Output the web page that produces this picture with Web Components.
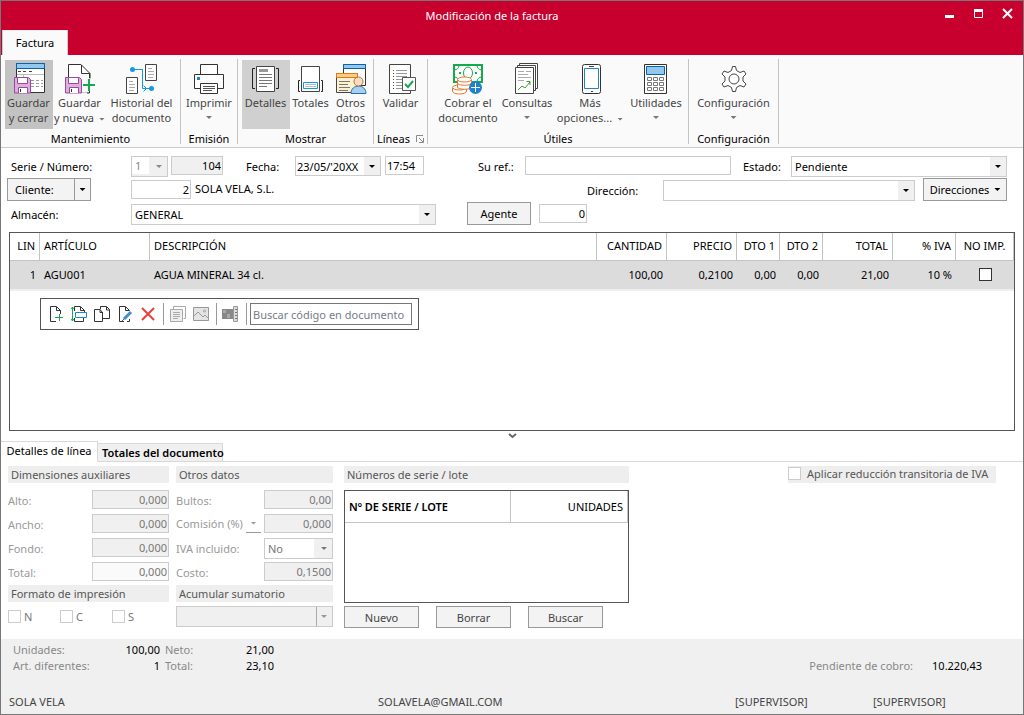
<!DOCTYPE html>
<html lang="es">
<head>
<meta charset="utf-8">
<title>Modificación de la factura</title>
<style>
html, body { margin: 0; height: 100%; }
body { font: 11px/15px "Noto Sans", "Open Sans", sans-serif; color: #000; background: #fff; }
</style>
</head>
<body>
<invoice-window></invoice-window>

<script>
const BASE = `
*, *::before, *::after { box-sizing: border-box; }
button, input, select { font: inherit; color: inherit; margin: 0; padding: 0; border-radius: 0; outline: 0; }
input[type=text] { height: 19px; border: 1px solid #ccc; background: #fff; padding: 0 3px; min-width: 0; }
input.num { text-align: right; padding: 0 1px; }
input:disabled, select:disabled { opacity: 1; }
.btn { border: 1px solid #999; background: #f3f3f3; text-align: center; white-space: nowrap; }
.sel { display: grid; position: relative; height: 21px; border: 1px solid #ccc; background: #fff; }
.sel select { appearance: none; border: 0; background: none; width: 100%; height: 100%; padding: 0 18px 0 3px; }
.sel::before { content: ""; position: absolute; top: 0; right: 0; bottom: 0; width: 16px; background: #f0f0f0; }
.sel::after, .tri::after { content: ""; width: 6px; height: 3px; background: currentColor; clip-path: polygon(0 0, 100% 0, 50% 100%); }
.sel::after { position: absolute; top: 8px; right: 5px; pointer-events: none; }
`;
function define(name, css, html, setup) {
  const tpl = document.createElement('template');
  tpl.innerHTML = `<style>${BASE}${css}</style>${html}`;
  customElements.define(name, class extends HTMLElement {
    connectedCallback() {
      if (this.shadowRoot) return;
      const root = this.attachShadow({ mode: 'open' });
      const content = tpl.content.cloneNode(true);
      if (setup) setup(this, content);
      root.append(content);
    }
  });
}

const FLOPPY = `<path d="M2.5 15.500h14l2 2v13.500h-16z" fill="#dcaedd" stroke="#9a4a9e"/><path d="M5.500 15.500h10v6h-10z" fill="#fff" stroke="#9a4a9e"/><path d="M6.500 31v-5.500h9V31" fill="#fff" stroke="#9a4a9e"/><path d="M8.500 27v3" stroke="#333"/>`;
const ICONS = {
  save: `<path d="M4.500 1.500h28v29h-28z" fill="#fff" stroke="#333"/><path d="M4.500 1.500h28v5h-28z" fill="#92c8ee" stroke="#0a63a8"/><path d="M6 9.500h3M11 9.500h3M17 9.500h3" stroke="#444"/><path d="M5 12.500h27M11.500 12.500v4" stroke="#bbb"/><path d="M19 18.500h3m2 0h3m2 0h2M19 21.500h3m2 0h3m2 0h2M19 24.500h3m2 0h3m2 0h2" stroke="#999"/>${FLOPPY}`,
  savenew: `<path d="M5.500 30V2.500H18l9 9V30H19" fill="#fff" stroke="#333"/><path d="M18.500 3v8.500H27" fill="none" stroke="#333"/>${FLOPPY}<path d="M19 16.500h13v14H19z" fill="#fafafa"/><path d="M26.500 29v2H24M26.500 12v4" fill="none" stroke="#333"/><path d="M20 23h12M26 17v12" stroke="#16a94d" stroke-width="2"/>`,
  history: `<g fill="#fff" stroke="#444"><path d="M20.500 2.500h11v16h-11zM1.500 15.500h11v16h-11z"/></g><path d="M23 6.500h4M23 9.500h6M23 12.500h6M23 15.500h5M4 19.500h4M4 22.500h6M4 25.500h6M4 28.500h5" stroke="#aaa"/><path d="M7 7.500h10.500v19H27M18.500 23.500l3 3-3 3" fill="none" stroke="#129bdb"/><circle cx="7.500" cy="7.500" r="2.500" fill="#129bdb"/><circle cx="26.500" cy="26.500" r="2.500" fill="#129bdb"/>`,
  print: `<g fill="#fff" stroke="#333"><path d="M8.500 12.500v-10h17v10z"/><path d="M2.500 12.500h29v14h-29z"/><path d="M8.500 21.500h17v10h-17z"/></g><path d="M5 15h3v3H5z" fill="#1e83c8"/><path d="M11 24.500h12M11 26.500h12M11 28.500h9" stroke="#555"/>`,
  details: `<path d="M7.500 4.500h18v25h-18z" fill="#fff" stroke="#444"/><path d="M10 7h9v3h-9z" fill="#999"/><path d="M10 12.500h13M10 15.500h13M10 18.500h13M10 21.500h13M10 24.500h8" stroke="#777"/><path d="M6 6.500H3.500v20H6M27 6.500h2.500v20H27" fill="none" stroke="#222"/>`,
  totals: `<path d="M7.500 4.500h18v25h-18z" fill="#fff" stroke="#444"/><path d="M9.500 20.500h14v6h-14z" fill="#fff" stroke="#129bdb"/><path d="M11 22.500h11M11 24.500h11" stroke="#bbb"/><path d="M6 18.500H4.500v11H6M27 18.500h1.500v11H27" fill="none" stroke="#222"/>`,
  other: `<path d="M9.500 2.500h22v21h-22z" fill="#fff" stroke="#333"/><path d="M9.500 2.500h22v4h-22z" fill="#92c8ee" stroke="#0a63a8"/><path d="M2.500 11.500h21v19h-21z" fill="#fdf0cf" stroke="#444"/><path d="M2.500 11.500h21v4h-21z" fill="#f8cf86" stroke="#dd7a1c"/><path d="M5 19.500h11M5 22.500h9M5 25.500h11M5 28.500h9" stroke="#777"/><path d="M17 31.500c0-10 15-10 15 0z" fill="#a9cfec" stroke="#1e72b5"/><circle cx="24.500" cy="19.500" r="4.500" fill="#fbdcc0" stroke="#b5713a"/>`,
  validate: `<path d="M5.500 2.500h21v29h-21z" fill="#fff" stroke="#444"/><path d="M9 8.500h1M9 17.500h1M9 23.500h1" stroke="#d22"/><path d="M9 11.500h1M9 14.500h1M9 20.500h1M9 26.500h1" stroke="#161"/><path d="M12 8.500h11M12 11.500h11M12 14.500h11M12 17.500h6M12 20.500h6M12 23.500h6M12 26.500h6" stroke="#999"/><path d="M18.500 15.500h13v13h-13z" fill="#fff" stroke="#555"/><path d="M21 22l3 3 5-6" fill="none" stroke="#16a94d" stroke-width="2"/>`,
  charge: `<path d="M3 3h28v17H3z" fill="#fff" stroke="#16a94d" stroke-width="2"/><path d="M3 8c3 0 5-2 5-5M31 8c-3 0-5-2-5-5M31 15c-3 0-5 2-5 5M3 15c3 0 5 2 5 5" fill="none" stroke="#16a94d"/><ellipse cx="17" cy="11" rx="4.500" ry="6" fill="none" stroke="#16a94d"/><path d="M8 11h2M24 11h2" stroke="#16a94d" stroke-width="2"/><g fill="#fff" stroke="#e8762c"><path d="M1.500 26v3c0 4 14 4 14 0v-3"/><ellipse cx="8.500" cy="25.500" rx="7" ry="2.500"/><path d="M6.500 18v7c0 3 14 3 14 0v-7"/><path d="M6.500 21c0 3 14 3 14 0"/><ellipse cx="13.500" cy="17.500" rx="7" ry="2.500"/></g><circle cx="24.500" cy="25.500" r="6.500" fill="#1e83c8"/><path d="M20 25.500h9M24.500 21v9" stroke="#fff"/>`,
  query: `<g fill="#fff" stroke="#444"><path d="M9.500 1.500h18v25h-18z"/><path d="M7.500 3.500h18v25h-18z"/><path d="M5.500 5.500h18v26h-18z"/></g><path d="M8 9.500h6M16 9.500h5M8 12.500h10M8 15.500h13M8 18.500h6" stroke="#aaa"/><path d="M8 28l4-4 3 2 5-6M16.500 19.500H20V23" fill="none" stroke="#38a52a"/>`,
  phone: `<rect x="9.500" y="2.500" width="18" height="29" rx="2" fill="#fff" stroke="#333"/><path d="M11.500 6.500h14v20h-14z" fill="#fff" stroke="#1e83c8"/><path d="M16 4.500h5M18 29.500h2" stroke="#444"/>`,
  calc: `<path d="M5.500 2.500h22v29h-22z" fill="#fff" stroke="#333"/><path d="M7.500 4.500h18v8h-18z" fill="#92c8ee" stroke="#0a63a8"/><path d="M8.500 15.500h4v3h-4zM14.500 15.500h4v3h-4zM20.500 15.500h4v3h-4zM8.500 20.500h4v3h-4zM14.500 20.500h4v3h-4zM20.500 20.500h4v3h-4zM8.500 25.500h4v3h-4zM14.500 25.500h4v3h-4zM20.500 25.500h4v3h-4z" fill="none" stroke="#777"/>`,
  gear: `<path id="g" d="M14.500 8.500l1-4h3l1 4 3.500 2 4-1.500 2 3-3 3v4l3 3-2 3-4-1.500-3.500 2-1 4h-3l-1-4-3.500-2-4 1.500-2-3 3-3v-4l-3-3 2-3 4 1.500z" fill="#fff" stroke="#444" stroke-linejoin="round"/><circle cx="17" cy="17" r="5" fill="none" stroke="#444"/>`
};
define('ribbon-icon', `:host { display: block; width: 34px; height: 33px; } svg { display: block; }`,
  `<svg width="34" height="34" viewBox="0 0 34 34" aria-hidden="true"></svg>`,
  (el, root) => { root.querySelector('svg').innerHTML = ICONS[el.getAttribute('name')]; });

define('title-bar', `
:host { display: grid; grid-template-columns: 1fr auto 1fr; align-items: start; background: #c8002d; color: #fff; height: 29px; padding: 0 8px 0 0; }
h1 { grid-column: 2; font: inherit; margin: 7px 32px 0 0; }
div { justify-self: end; display: flex; gap: 14px; padding-top: 5px; }
button { width: 15px; height: 15px; border: 0; background: none; display: grid; place-items: center; }
svg { display: block; }`,
`<h1><slot></slot></h1><div>
<button aria-label="Minimizar"><svg width="11" height="11"><path d="M1 8.500h9" stroke="#fff" stroke-width="3"/></svg></button>
<button aria-label="Maximizar"><svg width="11" height="11"><path d="M1.500 2v7.500h8V2" fill="none" stroke="#fff"/><path d="M1 2.500h9" stroke="#fff" stroke-width="3"/></svg></button>
<button aria-label="Cerrar"><svg width="11" height="11"><path d="M1 1l9 9M10 1l-9 9" stroke="#fff" stroke-width="2"/></svg></button></div>`);

define('ribbon-button', `
:host { display: block; height: 69px; color: #444; flex: none; }
:host([active]) { background: #d0d0d0; }
:host([focus]) { background: #c3c3c3; }
button { width: 100%; height: 100%; border: 0; background: none; padding-top: 2px; display: flex; flex-direction: column; align-items: center; white-space: nowrap; }
.tri { display: none; color: #777; }
:host([menu]) .tri { display: inline-flex; margin-left: 5px; vertical-align: middle; }
:host([menu=below]) .tri { display: flex; justify-content: center; margin: 6px 0 0; }`,
`<button><ribbon-icon></ribbon-icon><span><slot></slot><span class="tri"></span></span></button>`,
(el, root) => root.querySelector('ribbon-icon').setAttribute('name', el.getAttribute('icon')));

define('ribbon-group', `
:host { display: flex; flex-direction: column; height: 85px; border-right: 1px solid #c4c4c4; }
.row { display: flex; padding-top: 1px; justify-content: center; }
.name { display: flex; justify-content: center; gap: 6px; margin-top: 2px; align-items: center; }
svg { display: none; }
:host([launcher]) svg { display: block; }`,
`<div class="row"><slot></slot></div><div class="name"><span></span><svg width="8" height="8"><path d="M.5 7V.5H7M3 3l4 4M7.500 3v4.500H3" fill="none" stroke="#888"/></svg></div>`,
(el, root) => { root.querySelector('span').textContent = el.getAttribute('label'); });

define('ribbon-bar', `
:host { display: block; background: #c8002d; }
nav { padding-left: 1px; height: 25px; display: flex; }
nav button { width: 66px; border: 1px solid #ccc; border-bottom: 0; border-top-color: #eee; background: #fafafa; padding-bottom: 1px; }
.body { display: flex; background: #fafafa; padding-top: 4px; height: 93px; border-bottom: 1px solid #ccc; }
.w180 { width: 180px; } .w57 { width: 57px; } .w136 { width: 136px; } .w54 { width: 54px; } .w261 { width: 261px; } .w90 { width: 90px; }
.b38 { width: 38px; } .b42 { width: 42px; } .b48 { width: 48px; } .b54 { width: 54px; } .b70 { width: 70px; } .b78 { width: 78px; }`,
`<nav><button>Factura</button></nav>
<div class="body">
<ribbon-group class="w180" label="Mantenimiento">
<ribbon-button class="b48" icon="save" focus>Guardar<br>y cerrar</ribbon-button>
<ribbon-button class="b54" icon="savenew" menu>Guardar<br>y nueva</ribbon-button>
<ribbon-button class="b70" icon="history">Historial del<br>documento</ribbon-button></ribbon-group>
<ribbon-group class="w57" label="Emisión"><ribbon-button class="b48" icon="print" menu="below">Imprimir</ribbon-button></ribbon-group>
<ribbon-group class="w136" label="Mostrar">
<ribbon-button class="b48" icon="details" active>Detalles</ribbon-button>
<ribbon-button class="b42" icon="totals">Totales</ribbon-button>
<ribbon-button class="b38" icon="other">Otros<br>datos</ribbon-button></ribbon-group>
<ribbon-group class="w54" label="Líneas" launcher><ribbon-button class="b48" icon="validate">Validar</ribbon-button></ribbon-group>
<ribbon-group class="w261" label="Útiles">
<ribbon-button class="b70" icon="charge">Cobrar el<br>documento</ribbon-button>
<ribbon-button class="b48" icon="query" menu="below">Consultas</ribbon-button>
<ribbon-button class="b78" icon="phone" menu>Más<br>opciones...</ribbon-button>
<ribbon-button class="b54" icon="calc" menu="below">Utilidades</ribbon-button></ribbon-group>
<ribbon-group class="w90" label="Configuración"><ribbon-button class="b78" icon="gear" menu="below">Configuración</ribbon-button></ribbon-group>
</div>`);

define('invoice-form', `
:host { display: block; padding: 8px 16px 6px 6px; }
.row { display: flex; height: 24px; align-items: flex-start; }
.row:first-child { height: 22px; }
label { padding-top: 5px; flex: none; white-space: nowrap; }
.row:first-child label { padding-top: 3px; }
.first { width: 124px; padding-left: 4px; flex: none; }
.split { width: 124px; display: flex; flex: none; }
.split .btn:first-child { width: 68px; text-align: left; padding-left: 7px; }
.split .btn:last-child { width: 17px; margin-left: -1px; }
.btn { height: 23px; }
.tri { display: inline-flex; align-items: center; justify-content: center; gap: 5px; }
.serie { width: 37px; margin-right: 3px; color: #888; background: #f0f0f0; }
.serie select { background: #fff; width: 17px; padding: 0 0 0 3px; height: 17px; }
.gray { background: #f0f0f0 !important; }
.w39 { width: 39px; } .w48 { width: 48px; } .w52 { width: 52px; } .w60 { width: 60px; } .w64 { width: 64px; } .w84 { width: 84px; } .w86 { width: 86px; }
.date { height: 20px; }
.date select, .time.time { padding: 0 1px; }
.fecha { width: 72px; padding-left: 23px; }
.ref { width: 101px; padding-left: 54px; }
.estado { width: 60px; padding-left: 12px; }
.grow { flex: 1 1 206px; } .grow2 { flex: 1 1 216px; }
.name { width: 396px; padding: 3px 0 0 4px; flex: none; }
.dir { width: 76px; }
.alm { width: 305px; }
.mt { margin-top: 2px; }
.gap4 { margin-left: 4px; } .gap8 { margin-left: 8px; } .gap31 { margin-left: 31px; }`,
`<form>
<div class="row"><label class="first" for="serie">Serie / Número:</label>
<span class="sel serie"><select id="serie" disabled><option>1</option></select></span>
<input type="text" class="num gray w52" aria-label="Número" value="104">
<label class="fecha" for="fecha">Fecha:</label>
<span class="sel w86 date"><select id="fecha"><option>23/05/'20XX</option></select></span>
<input type="text" class="w39 gap4 time" aria-label="Hora" value="17:54">
<label class="ref" for="ref">Su ref.:</label><input type="text" class="grow" id="ref">
<label class="estado" for="estado">Estado:</label>
<span class="sel grow2"><select id="estado"><option>Pendiente</option></select></span></div>
<div class="row"><span class="split"><button type="button" class="btn">Cliente:</button><button type="button" class="btn tri" aria-label="Opciones de cliente"></button></span>
<input type="text" class="num w60 mt" aria-label="Código de cliente" value="2"><span class="name">SOLA VELA, S.L.</span>
<label class="dir" for="dir">Dirección:</label>
<span class="sel grow mt"><select id="dir"><option></option></select></span>
<button type="button" class="btn tri w84 gap8">Direcciones</button></div>
<div class="row"><label class="first" for="alm">Almacén:</label>
<span class="sel alm mt"><select id="alm"><option>GENERAL</option></select></span>
<button type="button" class="btn w64 gap31">Agente</button>
<input type="text" class="num w48 gap8 mt" aria-label="Agente" value="0"></div>
</form>`);

define('line-toolbar', `
:host { display: flex; align-items: center; width: 379px; height: 32px; border: 1px solid #555; background: #fff; padding: 0 6px 0 3px; }
button { width: 23px; height: 22px; border: 0; background: none; display: grid; place-items: center; flex: none; }
i { width: 1px; height: 22px; background: #999; margin: 0 2px 0 4px; flex: none; }
input[type=text] { flex: 1; height: 22px; border-color: #777; padding: 0 2px; margin-left: 1px; }
input::placeholder { color: #757b88; opacity: 1; }
svg { display: block; fill: none; stroke: #333; }`,
`<button aria-label="Nueva línea"><svg width="16" height="16"><path d="M8 15.500H2.500V.500h6l4 4V8M8.500 1v3.500h4"/><path d="M7 11.500h8M11.500 8v7" stroke="#16a94d"/></svg></button>
<button aria-label="Insertar línea"><svg width="16" height="16"><path d="M3.500 5V.500h6l4 4V6M9.500 1v3.500h4M3.500 12v3.500h9V12"/><path d="M4.500 6.500h11v5h-11z" stroke="#1e83c8"/><path d="M1.500 1v14M0 3l1.500-2L3 3M0 13l1.500 2L3 13" stroke="#16a94d"/></svg></button>
<button aria-label="Duplicar"><svg width="18" height="16"><path d="M7 3.500H1.500v12h8v-9L7 3.500v3h3"/><path d="M7.500 3V.500h6l3 3v9h-7M13.500 1v3h3"/></svg></button>
<button aria-label="Modificar"><svg width="16" height="16"><path d="M7 15.500H2.500V.500h6l4 4M8.500 1v3.500h4M10 15.500h2.500V13"/><path d="M7 13l7-7" stroke="#3b8fd2" stroke-width="3"/><path d="M5 15l2-2" stroke="#1e72b5"/></svg></button>
<button aria-label="Eliminar"><svg width="14" height="14"><path d="M1 1l12 12M13 1L1 13" stroke="#e8403c" stroke-width="2"/></svg></button>
<i></i>
<button aria-label="Notas"><svg width="16" height="16" style="stroke:#aaa"><path d="M3.500 3V.500h12v12h-2"/><path d="M.5 3.500h12v12H.5z" fill="#eee"/><path d="M3 6.500h7M3 8.500h7M3 10.500h7M3 12.500h5"/></svg></button>
<button aria-label="Imagen"><svg width="16" height="14" style="stroke:#999"><path d="M.5.500h15v13H.5z" fill="#e4e4e4"/><path d="M1 9l4-4 5 5 2-2 3 3" /><circle cx="11.500" cy="4" r="1" fill="#fff"/></svg></button>
<i></i>
<button aria-label="Tallas y colores"><svg width="17" height="16" style="stroke:none"><path d="M0 3h11v10H0z" fill="#888"/><path d="M1 4h3v3H1zM5 8h3v4H5z" fill="#aaa"/><path d="M11.500.500h4v15h-4z" fill="#ddd" stroke="#999"/><path d="M13 3.500h2M13 6.500h2M13 9.500h2M13 12.500h2" stroke="#777"/></svg></button>
<i></i>
<input type="text" aria-label="Buscar código en documento" placeholder="Buscar código en documento">`);

define('invoice-lines', `
:host { display: block; flex: 1; margin: 0 8px; border: 1px solid #555; min-height: 199px; }
table { width: 100%; border-collapse: separate; border-spacing: 0; table-layout: fixed; }
th { font-weight: normal; height: 28px; text-align: right; border-right: 1px solid #c4c4c4; border-bottom: 1px solid #c4c4c4; padding: 0 4px 2px; white-space: nowrap; }
td { height: 28px; background: #dcdcdc; text-align: right; padding: 0 4px 2px; }
.l { text-align: left; } .c { text-align: center; }
th.c { padding: 0 0 2px; }
tbody { box-shadow: 0 2px #efefef; }
.a { width: 30px; } .b { width: 110px; } .q { width: 70px; } .d { width: 43px; } .v { width: 63px; } .n { width: 58px; }
input { appearance: none; width: 13px; height: 13px; border: 1px solid #333; background: #fff; display: block; margin: 0 auto; }
line-toolbar { margin: 9px 0 0 30px; }`,
`<table><thead><tr><th class="a">LIN</th><th class="b l">ARTÍCULO</th><th class="l">DESCRIPCIÓN</th><th class="q">CANTIDAD</th><th class="q">PRECIO</th><th class="d">DTO 1</th><th class="d">DTO 2</th><th class="q">TOTAL</th><th class="v">% IVA</th><th class="n c">NO IMP.</th></tr></thead>
<tbody><tr><td>1</td><td class="l">AGU001</td><td class="l">AGUA MINERAL 34 cl.</td><td>100,00</td><td>0,2100</td><td>0,00</td><td>0,00</td><td>21,00</td><td>10 %</td><td class="c"><input type="checkbox" aria-label="No imprimir"></td></tr></tbody></table>
<line-toolbar></line-toolbar>`);

define('detail-tabs', `
:host { display: block; }
.fold { display: flex; justify-content: center; height: 10px; padding: 2px 0 0; }
.fold svg { display: block; }
.tabs { display: flex; align-items: flex-end; height: 21px; border-bottom: 1px solid #d9d9d9; }
button { border: 1px solid #d9d9d9; background: #fff; white-space: nowrap; padding: 0 4px; }
.on { height: 21px; width: 97px; border-bottom-color: #fff; margin-bottom: -1px; border-left: 0; padding-bottom: 2px; }
.off { height: 18px; width: 126px; font-weight: 600; background: #f0f0f0; margin-left: -1px; border-bottom: 0; }`,
`<div class="fold"><svg width="9" height="6"><path d="M1 1l3.500 3L8 1" fill="none" stroke="#666" stroke-width="2"/></svg></div>
<div class="tabs"><button class="on">Detalles de línea</button><button class="off">Totales del documento</button></div>`);

define('line-details', `
:host { display: flex; padding: 4px 27px 11px 7px; color: #777; }
h2 { font: inherit; color: #555; background: #eee; margin: 0; height: 17px; line-height: 17px; padding-left: 3px; white-space: nowrap; }
.aux { width: 161px; margin-right: 7px; } .other { width: 157px; margin-right: 11px; }
.rows { display: grid; grid-template-columns: 1fr auto; row-gap: 5px; margin: 7px 0 4px; }
.rows label { padding-top: 3px; white-space: nowrap; color: #999; }
.rows .num { width: 77px; background: #f0f0f0; }
.other .num { width: 69px; }
.rows .pale { background: #fafafa; }
.lab { display: flex; justify-content: space-between; margin-right: 3px; }
.rows .lab label { padding-top: 2px; }
.lab button { width: 15px; height: 19px; border: 0; border-bottom: 1px solid #999; background: none; color: #999; display: grid; place-items: center; }
.yes { width: 69px; height: 21px; margin-bottom: -2px; background: #f0f0f0; color: #777; }
.yes select { background: #fff; width: 49px; padding: 0 3px; }
.checks { display: flex; margin-top: 7px; height: 15px; }
.checks label { display: flex; align-items: center; width: 52px; gap: 3px; }
input[type=checkbox] { appearance: none; width: 13px; height: 13px; border: 1px solid #ccc; background: #fff; flex: none; }
.sum { margin-top: 4px; background: #f0f0f0; border-color: #ccc; color: #999; }
.sum::before { border-left: 1px solid #aaa; }
.serial { width: 285px; }
.grid { height: 113px; border: 1px solid #555; margin: 7px 0 3px; }
table { width: 100%; border-spacing: 0; color: #000; table-layout: fixed; }
th { height: 32px; border-right: 1px solid #c4c4c4; border-bottom: 1px solid #c4c4c4; padding: 0 4px; text-align: left; font-weight: 600; }
th + th { text-align: right; font-weight: normal; width: 117px; }
.buttons { display: flex; gap: 17px; }
.buttons .btn { width: 75px; height: 22px; color: #444; }
.vat { margin-left: auto; width: 208px; height: 17px; background: #eee; color: #555; display: flex; gap: 6px; white-space: nowrap; }
.vat input { margin-top: 1px; }`,
`<section class="aux"><h2>Dimensiones auxiliares</h2><div class="rows">
<label for="a1">Alto:</label><input type="text" class="num" id="a1" value="0,000" disabled>
<label for="a2">Ancho:</label><input type="text" class="num" id="a2" value="0,000" disabled>
<label for="a3">Fondo:</label><input type="text" class="num" id="a3" value="0,000" disabled>
<label for="a4">Total:</label><input type="text" class="num pale" id="a4" value="0,000" disabled></div>
<h2>Formato de impresión</h2>
<div class="checks"><label><input type="checkbox">N</label><label><input type="checkbox">C</label><label><input type="checkbox">S</label></div></section>
<section class="other"><h2>Otros datos</h2><div class="rows">
<label for="b1">Bultos:</label><input type="text" class="num" id="b1" value="0,00" disabled>
<span class="lab"><label for="b2">Comisión (%)</label><button class="tri" aria-label="Tipo de comisión"></button></span><input type="text" class="num" id="b2" value="0,000" disabled>
<label for="b3">IVA incluido:</label><span class="sel yes"><select id="b3" disabled><option>No</option></select></span>
<label for="b4">Costo:</label><input type="text" class="num" id="b4" value="0,1500" disabled></div>
<h2>Acumular sumatorio</h2><span class="sel sum"><select aria-label="Acumular sumatorio" disabled><option></option></select></span></section>
<section class="serial"><h2>Números de serie / lote</h2>
<div class="grid"><table><thead><tr><th>Nº DE SERIE / LOTE</th><th>UNIDADES</th></tr></thead></table></div>
<div class="buttons"><button class="btn">Nuevo</button><button class="btn">Borrar</button><button class="btn">Buscar</button></div></section>
<label class="vat"><input type="checkbox">Aplicar reducción transitoria de IVA</label>`);

define('status-bar', `
:host { display: block; background: #f0f0f0; color: #444; }
.totals { display: flex; justify-content: space-between; padding: 3px 41px 0 12px; line-height: 16px; color: #888; }
dl { margin: 0; display: grid; grid-template-columns: 92px 55px 48px 66px; }
dl.due { grid-template-columns: auto 69px; align-content: end; }
dt, dd { margin: 0; white-space: nowrap; }
dd { color: #000; text-align: right; }
dt:nth-of-type(even) { padding-left: 5px; }
.user { display: grid; grid-template-columns: 369fr 357fr 138fr 150fr; padding: 20px 0 5px 8px; }`,
`<div class="totals"><dl><dt>Unidades:</dt><dd>100,00</dd><dt>Neto:</dt><dd>21,00</dd><dt>Art. diferentes:</dt><dd>1</dd><dt>Total:</dt><dd>23,10</dd></dl>
<dl class="due"><dt>Pendiente de cobro:</dt><dd>10.220,43</dd></dl></div>
<div class="user"><span>SOLA VELA</span><span>SOLAVELA@GMAIL.COM</span><span>[SUPERVISOR]</span><span>[SUPERVISOR]</span></div>`);

define('invoice-window', `
:host { display: flex; flex-direction: column; min-height: 100vh; border: 1px solid #777; background: #fff; box-sizing: border-box; }`,
`<title-bar>Modificación de la factura</title-bar><ribbon-bar></ribbon-bar><invoice-form></invoice-form><invoice-lines></invoice-lines><detail-tabs></detail-tabs><line-details></line-details><status-bar></status-bar>`);
</script>
</body>
</html>
